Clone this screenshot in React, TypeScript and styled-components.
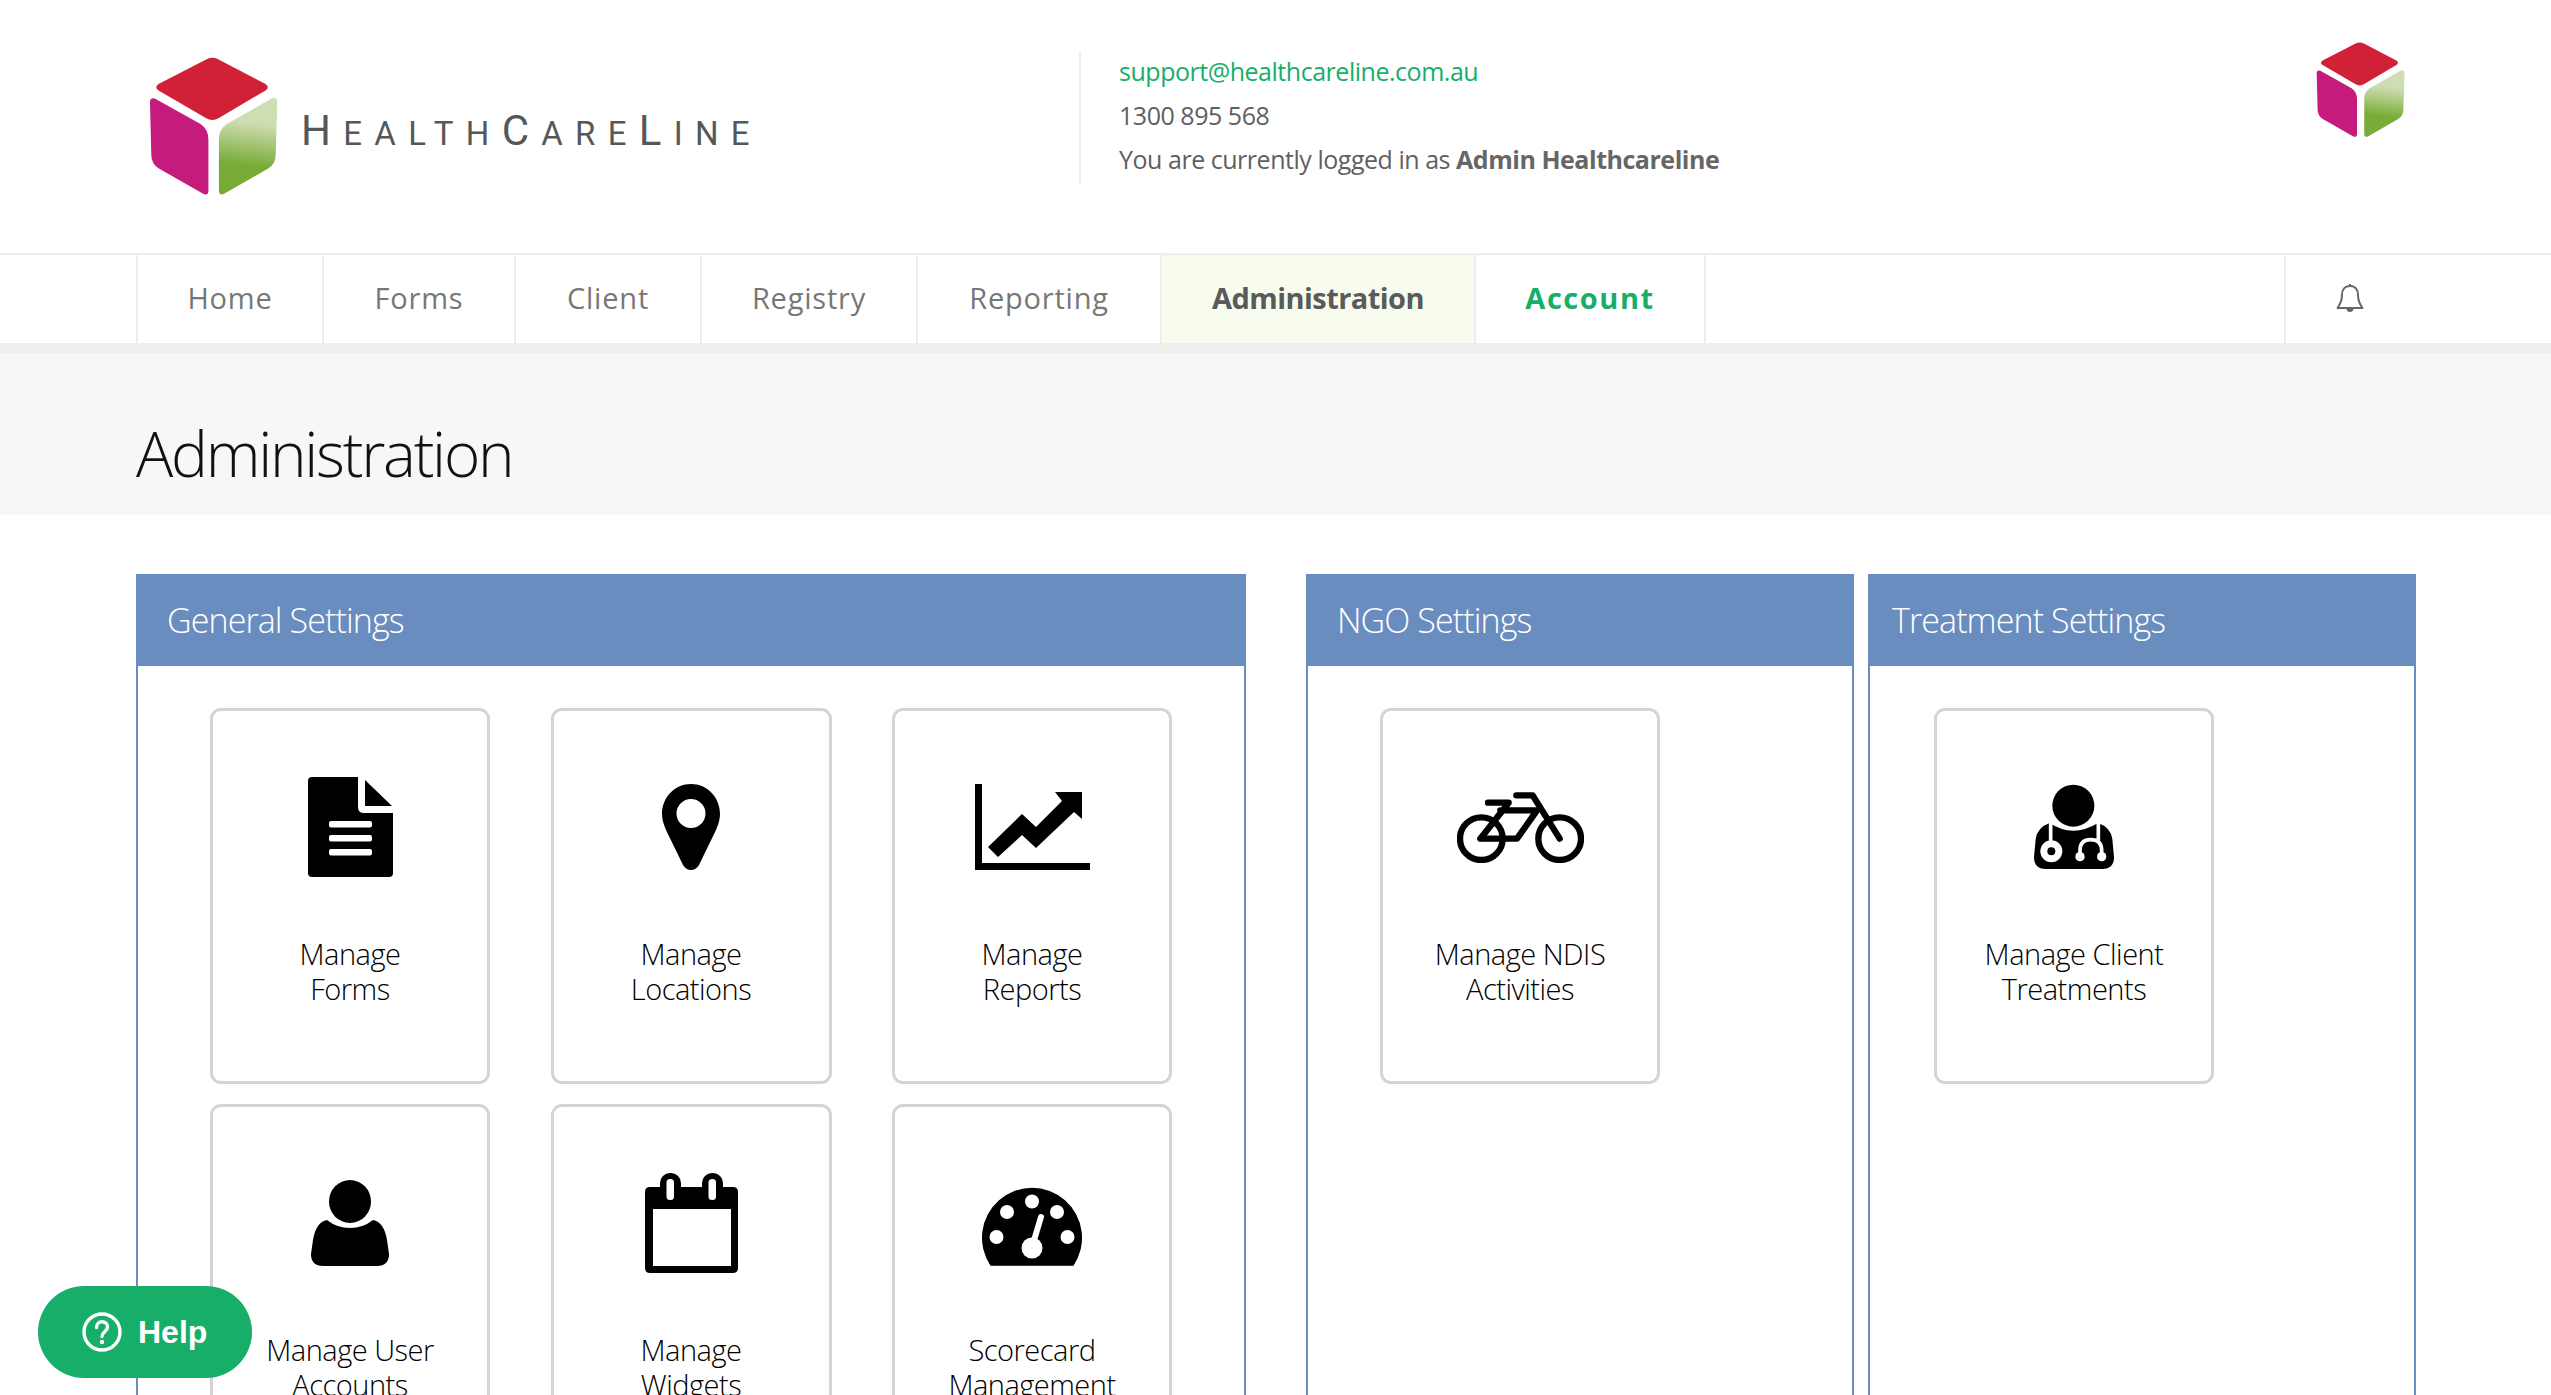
import React from "react";
import styled, { createGlobalStyle } from "styled-components";

const Global = createGlobalStyle`
  html, body { margin: 0; padding: 0; height: 100%; overflow: hidden; background: #fff; }
  body { font-family: "Open Sans", "Liberation Sans", sans-serif; color: #555; }
  * { box-sizing: border-box; }
`;

const Page = styled.div`
  width: 2551px;
  height: 1395px;
  overflow: hidden;
  position: relative;
`;

const Header = styled.header`
  height: 253px;
  display: flex;
  align-items: center;
  padding-left: 149px;
`;

const Logo = styled.div`
  display: flex;
  align-items: center;
  gap: 23px;
  width: 600px;
`;

const CubeSvg = styled.svg<{ $w: number }>`
  width: ${(p) => p.$w}px;
  flex: none;
  display: block;
`;

const Wordmark = styled.div`
  font-family: Roboto, "Liberation Sans", sans-serif;
  font-weight: 400;
  color: #565758;
  font-size: 33px;
  line-height: 44px;
  letter-spacing: 12.3px;
  white-space: nowrap;
  margin-top: 12px;
`;

const Cap = styled.span`
  font-size: 42px;
`;

const Contact = styled.div`
  align-self: flex-start;
  margin-top: 51px;
  margin-left: 330px;
  height: 132px;
  border-left: 2px solid #eee;
  padding-left: 38px;
  font-size: 25px;
  line-height: 44px;
  letter-spacing: -0.47px;
  color: #5f5f5f;
  white-space: nowrap;
`;

const Mail = styled.a`
  color: #16ae68;
  display: block;
  margin-top: -2px;
`;

const ContactLine = styled.div`
  b { font-weight: 700; color: #666; }
`;

const SmallCube = styled.div`
  align-self: flex-start;
  margin: 42px 146px 0 auto;
`;

const Nav = styled.nav`
  height: 100px;
  border-top: 2px solid #eee;
  border-bottom: 10px solid #eee;
  display: flex;
  padding-left: 136px;
`;

const NavItem = styled.a<{ $active?: boolean; $accent?: boolean; $w: number }>`
  width: ${(p) => p.$w}px;
  display: flex;
  align-items: center;
  justify-content: center;
  padding-bottom: 3px;
  border-left: 2px solid #eee;
  font-size: 29px;
  letter-spacing: ${(p) => (p.$active ? "-0.55px" : p.$accent ? "1.55px" : "0.8px")};
  font-weight: ${(p) => (p.$active || p.$accent ? 700 : 400)};
  color: ${(p) => (p.$accent ? "#16ae68" : p.$active ? "#5a5a5a" : "#777")};
  background: ${(p) => (p.$active ? "#f7fcef" : "transparent")};
  &:last-of-type { border-right: 2px solid #eee; }
`;

const BellCell = styled.div`
  margin-left: auto;
  width: 267px;
  border-left: 2px solid #eee;
  display: flex;
  align-items: center;
  padding: 0 0 3px 50px;
`;

const TitleBand = styled.div`
  height: 162px;
  background: #f7f7f7;
  display: flex;
  align-items: center;
  padding-left: 136px;
`;

const Title = styled.h1`
  margin: 37px 0 0;
  font-size: 62px;
  font-weight: 300;
  letter-spacing: -2.25px;
  color: #111;
`;

const Panels = styled.main`
  display: flex;
  align-items: flex-start;
  padding: 59px 0 0 136px;
`;

const Panel = styled.section<{ $w: number; $left: number }>`
  width: ${(p) => p.$w}px;
  margin-left: ${(p) => p.$left}px;
  height: 900px;
  border: 2px solid #6a8dc0;
  flex: none;
`;

const PanelHead = styled.h2<{ $pad: number }>`
  margin: 0;
  height: 90px;
  background: #6a8dc0;
  color: #fff;
  font-size: 34px;
  font-weight: 300;
  letter-spacing: -0.9px;
  line-height: 88px;
  padding-left: ${(p) => p.$pad}px;
`;

const CardGrid = styled.div<{ $pad: number }>`
  display: grid;
  grid-template-columns: 280px 281px 280px;
  column-gap: 60.5px;
  row-gap: 19.5px;
  padding: 42px 0 0 ${(p) => p.$pad}px;
`;

const Card = styled.a`
  height: 376px;
  border: 3px solid #d4d4d4;
  border-radius: 11px;
  background: #fff;
  display: flex;
  flex-direction: column;
  align-items: center;
  padding-top: 48px;
  color: #000;
`;

const IconSlot = styled.div`
  height: 136px;
  display: flex;
  align-items: center;
  justify-content: center;
  flex: none;
`;

const CardLabel = styled.div`
  margin-top: 41px;
  text-align: center;
  font-size: 29px;
  font-weight: 300;
  line-height: 35px;
  letter-spacing: -0.5px;
  color: #000;
`;

const Help = styled.button`
  position: fixed;
  left: 38px;
  bottom: 17px;
  width: 214px;
  height: 92px;
  border: 0;
  border-radius: 46px;
  background: #16ae68;
  color: #fff;
  display: flex;
  align-items: center;
  gap: 16px;
  padding: 0 0 0 44px;
  font-family: "Liberation Sans", Arial, sans-serif;
  font-weight: 700;
  font-size: 32px;
`;

const Cube = ({ w, id }: { w: number; id: string }) => (
  <CubeSvg $w={w} viewBox="55 48 393 422">
    <defs>
      <linearGradient id={id} gradientUnits="userSpaceOnUse" x1="350" y1="245" x2="335" y2="375">
        <stop offset="0" stopColor="#cfddb3" />
        <stop offset="1" stopColor="#79ac37" />
      </linearGradient>
    </defs>
    <path fill="#d12136" d="M232 54Q248 47 264 54L410 130Q424 140 410 150L268 234Q248 246 228 234L84 150Q70 140 84 130Z" />
    <path fill="#c41b7d" d="M58 186Q58 170 74 175L212 252Q236 268 236 300L236 455Q236 472 220 465L85 388Q62 374 62 345Z" />
    <path fill={`url(#${id})`} d="M268 300Q268 268 292 252L428 175Q446 168 446 186L441 345Q441 374 418 388L284 465Q268 472 268 455Z" />
  </CubeSvg>
);

const DocIcon = () => (
  <svg width="85" height="100" viewBox="0 0 85 100">
    <path d="M4 0H50V30Q50 36 56 36H85V96Q85 100 81 100H4Q0 100 0 96V4Q0 0 4 0Z" />
    <path d="M57 3L84 29H57Z" />
    <rect x="21" y="44" width="43" height="6.5" rx="2" fill="#fff" />
    <rect x="21" y="58" width="43" height="6.5" rx="2" fill="#fff" />
    <rect x="21" y="72" width="43" height="6.5" rx="2" fill="#fff" />
  </svg>
);

const PinIcon = () => (
  <svg width="58" height="86" viewBox="0 0 58 86">
    <path fillRule="evenodd" d="M29 0C45 0 58 13 58 30C58 36 56 41 54 46L37 81Q34 86 29 86Q24 86 21 81L4 46C2 41 0 36 0 30C0 13 13 0 29 0ZM29 15A14.5 14.5 0 1 0 29 44A14.5 14.5 0 1 0 29 15Z" />
  </svg>
);

const ChartIcon = () => (
  <svg width="115" height="86" viewBox="0 0 115 86">
    <path d="M0 0H7V79H115V86H0Z" />
    <path d="M13 63L23 73L47 51L61 64L99 28L107 35V8H80L87 17L61 43L47 30Z" />
  </svg>
);

const BikeIcon = () => (
  <svg width="127" height="72" viewBox="35 30 381 216" fill="none" stroke="#000" strokeWidth="19" strokeLinecap="round" strokeLinejoin="round">
    <circle cx="108" cy="173" r="64" />
    <circle cx="343" cy="173" r="64" />
    <path d="M128 65H190L105 173H215L275 88H165" />
    <path d="M213 43H262L343 173" />
  </svg>
);

const DoctorIcon = () => (
  <svg width="80" height="86" viewBox="45 30 240 258">
    <circle cx="163" cy="95" r="63" />
    <path d="M92 147Q55 160 50 195L45 250Q45 285 80 285H250Q285 285 285 250L280 195Q275 160 237 147Q200 170 163 170Q126 170 92 147Z" />
    <path d="M95 145V205M238 145V200M183 248V230Q183 197 215 197Q248 197 248 230V248" fill="none" stroke="#fff" strokeWidth="11" strokeLinecap="round" />
    <circle cx="97" cy="232" r="33" fill="#fff" />
    <circle cx="97" cy="232" r="12" />
    <circle cx="183" cy="248" r="14" fill="#fff" />
    <circle cx="248" cy="248" r="14" fill="#fff" />
  </svg>
);

const UserIcon = () => (
  <svg width="78" height="86" viewBox="0 0 78 86">
    <ellipse cx="39" cy="21.5" rx="21" ry="21.5" />
    <path d="M16 40Q5 42 2 60L0 74Q0 86 12 86H66Q78 86 78 74L76 60Q73 42 62 40Q52 48 39 48Q26 48 16 40Z" />
  </svg>
);

const CalendarIcon = () => (
  <svg width="93" height="100" viewBox="0 0 93 100">
    <path fillRule="evenodd" d="M5 14H88Q93 14 93 19V95Q93 100 88 100H5Q0 100 0 95V19Q0 14 5 14ZM8 36V93H86V36Z" />
    <rect x="15" y="0" width="21" height="28" rx="10" />
    <rect x="57" y="0" width="21" height="28" rx="10" />
    <rect x="21.5" y="6" width="7.5" height="21" rx="3.5" fill="#fff" />
    <rect x="63.5" y="6" width="7.5" height="21" rx="3.5" fill="#fff" />
  </svg>
);

const GaugeIcon = () => (
  <svg width="100" height="86" viewBox="0 -7 100 86">
    <path d="M8.5 78.7A50 50 0 1 1 91.5 78.7Z" />
    <g fill="#fff">
      <circle cx="14.5" cy="50" r="7" />
      <circle cx="25" cy="25" r="7" />
      <circle cx="50" cy="14.5" r="7" />
      <circle cx="75" cy="25" r="7" />
      <circle cx="85.5" cy="50" r="7" />
      <circle cx="50" cy="61" r="10.5" />
    </g>
    <path d="M50 60L59 30" stroke="#fff" strokeWidth="6" strokeLinecap="round" />
  </svg>
);

const BellIcon = () => (
  <svg width="28" height="30" viewBox="0 0 28 30" fill="none" stroke="#666" strokeWidth="2" strokeLinejoin="round">
    <path d="M14 3C8.5 3 6 7 6 12C6 18 4.5 21 1.5 25H26.500C23.500 21 22 18 22 12C22 7 19.500 3 14 3Z" />
    <path d="M14 1V3" />
    <path d="M10.500 25.500A3.500 3.500 0 0 0 17.500 25.500Z" fill="#666" stroke="none" />
  </svg>
);

const HelpGlyph = () => (
  <svg width="40" height="40" viewBox="0 0 40 40" fill="none" stroke="#fff" strokeWidth="3.4" strokeLinecap="round">
    <circle cx="20" cy="20" r="18" />
    <path d="M14.500 15.500C14.500 8 25.500 8 25.500 15C25.500 19.500 20 19.500 20 24.500" />
    <circle cx="20" cy="30" r="1" strokeWidth="2.400" fill="#fff" />
  </svg>
);

const navItems = [
  { label: "Home", w: 186 },
  { label: "Forms", w: 192 },
  { label: "Client", w: 186 },
  { label: "Registry", w: 216 },
  { label: "Reporting", w: 244 },
  { label: "Administration", w: 314, active: true },
  { label: "Account", w: 232, accent: true },
];

const panels = [
  {
    title: "General Settings",
    w: 1110,
    left: 0,
    pad: 72,
    headPad: 29,
    cards: [
      { lines: ["Manage", "Forms"], icon: <DocIcon /> },
      { lines: ["Manage", "Locations"], icon: <PinIcon /> },
      { lines: ["Manage", "Reports"], icon: <ChartIcon /> },
      { lines: ["Manage User", "Accounts"], icon: <UserIcon /> },
      { lines: ["Manage", "Widgets"], icon: <CalendarIcon /> },
      { lines: ["Scorecard", "Management"], icon: <GaugeIcon /> },
    ],
  },
  {
    title: "NGO Settings",
    w: 548,
    left: 60,
    pad: 72,
    headPad: 29,
    cards: [{ lines: ["Manage NDIS", "Activities"], icon: <BikeIcon /> }],
  },
  {
    title: "Treatment Settings",
    w: 548,
    left: 14,
    pad: 64,
    headPad: 22,
    cards: [{ lines: ["Manage Client", "Treatments"], icon: <DoctorIcon /> }],
  },
];

export default function App() {
  return (
    <Page>
      <Global />
      <Header>
        <Logo>
          <Cube w={129} id="g1" />
          <Wordmark>
            <Cap>H</Cap>EALTH<Cap>C</Cap>ARE<Cap>L</Cap>INE
          </Wordmark>
        </Logo>
        <Contact>
          <Mail>support@healthcareline.com.au</Mail>
          <ContactLine>1300 895 568</ContactLine>
          <ContactLine>
            You are currently logged in as <b>Admin Healthcareline</b>
          </ContactLine>
        </Contact>
        <SmallCube>
          <Cube w={89} id="g2" />
        </SmallCube>
      </Header>
      <Nav>
        {navItems.map((n) => (
          <NavItem key={n.label} $w={n.w} $active={n.active} $accent={n.accent}>
            {n.label}
          </NavItem>
        ))}
        <BellCell>
          <BellIcon />
        </BellCell>
      </Nav>
      <TitleBand>
        <Title>Administration</Title>
      </TitleBand>
      <Panels>
        {panels.map((p) => (
          <Panel key={p.title} $w={p.w} $left={p.left}>
            <PanelHead $pad={p.headPad}>{p.title}</PanelHead>
            <CardGrid $pad={p.pad}>
              {p.cards.map((c) => (
                <Card key={c.lines.join(" ")}>
                  <IconSlot>{c.icon}</IconSlot>
                  <CardLabel>
                    {c.lines[0]}
                    <br />
                    {c.lines[1]}
                  </CardLabel>
                </Card>
              ))}
            </CardGrid>
          </Panel>
        ))}
      </Panels>
      <Help>
        <HelpGlyph />
        Help
      </Help>
    </Page>
  );
}
